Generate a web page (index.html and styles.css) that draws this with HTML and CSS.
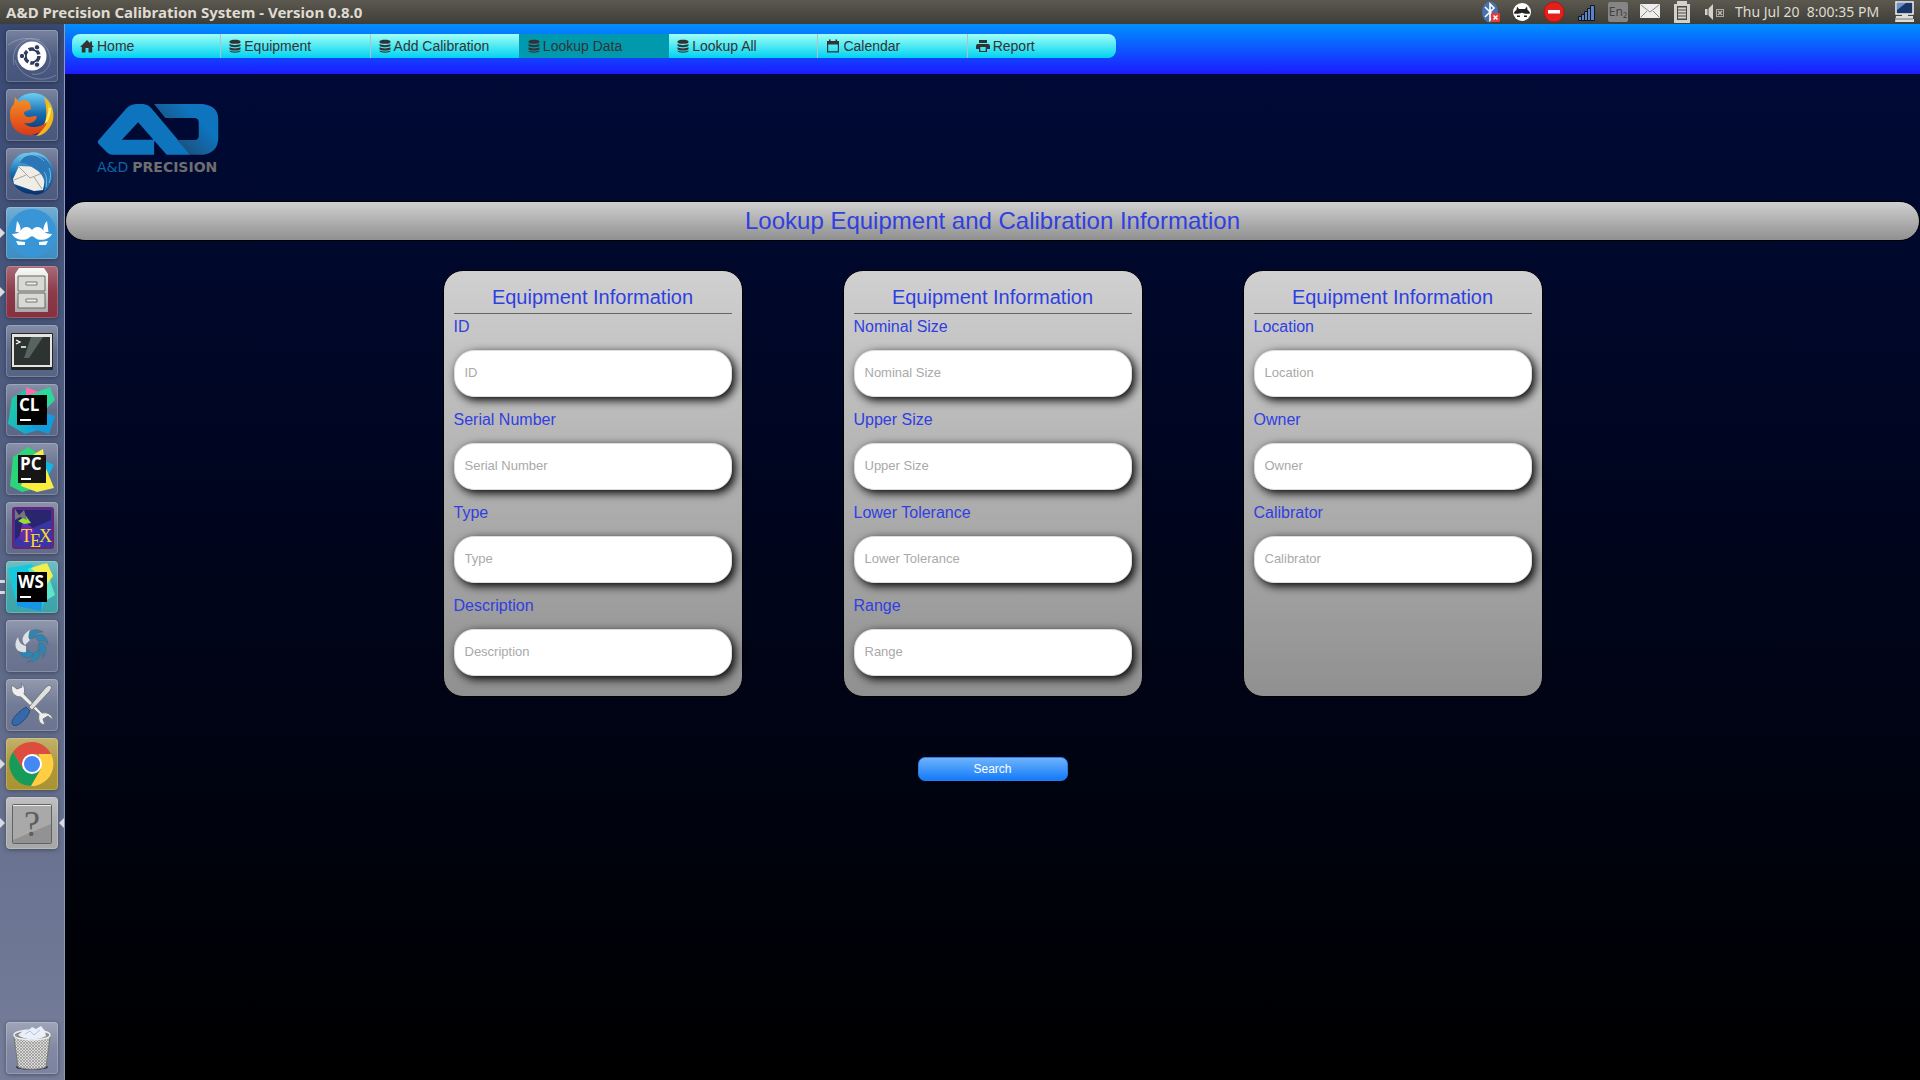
FILE: index.html
```html
<!DOCTYPE html>
<html lang="en">
<head>
<meta charset="utf-8">
<title>A&amp;D Precision Calibration System</title>
<link rel="stylesheet" href="styles.css">
</head>
<body>
<svg class="defs" aria-hidden="true">
  <defs>
    <symbol id="db" viewBox="0 0 12 14"><path d="M.5 2.600C.5 0 11.500 0 11.500 2.600v.6C11.500 5.400.5 5.400.5 3.200zM.5 5c2.300 1.500 8.700 1.500 11 0v1.600c0 2.200-11 2.200-11 0zM.5 8.300c2.300 1.500 8.700 1.500 11 0v1.600c0 2.200-11 2.200-11 0zM.5 11.500c2.300 1.400 8.700 1.400 11 0v.5c0 2.300-11 2.300-11 0z"/></symbol>
    <linearGradient id="steel" x2="0" y2="1"><stop stop-color="#fafaf8"/><stop offset="1" stop-color="#a9a9a5"/></linearGradient>
    <linearGradient id="sea" x2="0" y2="1"><stop stop-color="#6cd0f4"/><stop offset=".5" stop-color="#1769ae"/><stop offset="1" stop-color="#0a2f6c"/></linearGradient>
    <linearGradient id="fox" x2="0" y2="1"><stop stop-color="#f79226"/><stop offset="1" stop-color="#d93a16"/></linearGradient>
    <linearGradient id="mint" x2="1" y2="1"><stop stop-color="#22d88f"/><stop offset="1" stop-color="#0f9de8"/></linearGradient>
    <linearGradient id="shade" x1="0" x2="1" y1="1" y2=".2"><stop offset=".3" stop-color="#1d4f7c"/><stop offset=".75" stop-color="#0d74bd"/></linearGradient>
    <pattern id="mesh" width="3" height="3" patternUnits="userSpaceOnUse"><rect width="3" height="3" fill="#dcdcda"/><path d="M0 0l3 3M3 0L0 3" stroke="#81817f" stroke-width=".6"/></pattern>
  </defs>
</svg>

<header class="panel">
  <span class="panel-title">A&amp;D Precision Calibration System - Version 0.8.0</span>
  <div class="tray">
    <svg class="tray-icon" viewBox="0 0 32 24"><ellipse cx="15" cy="12" rx="8" ry="10.500" fill="#4673ad"/><path d="M10 7l9 9-4 4V4l4 4-9 9" fill="none" stroke="#fff" stroke-width="1.600"/><rect x="16" y="13" width="9" height="9" rx="1" fill="#e53b3b"/><path d="M18.500 15.500l4 4m0-4l-4 4" stroke="#fff" stroke-width="1.500"/></svg>
    <svg class="tray-icon" viewBox="0 0 32 24"><circle cx="15" cy="12" r="9" fill="#fff"/><path d="M9.500 10l.5-3.500L12 9h6l2-2.500.5 3.500c1.500 1 2.500 2 2.500 3.500-3 .8-5 .2-8-.8-3 1-5 1.600-8 .8 0-1.500 1-2.500 2.500-3.500zM10 15.500h3v1.500h-3zM17 15.500h3v1.500h-3z" fill="#222"/></svg>
    <svg class="tray-icon" viewBox="0 0 32 24"><circle cx="15" cy="12" r="10" fill="#e3201b" stroke="#b81410"/><rect x="9" y="10" width="12" height="3.500" fill="#fff"/></svg>
    <svg class="tray-icon" viewBox="0 0 32 24"><g fill="#5b83c4" stroke="#10151f"><path d="M7.500 16.500h3v4h-3zM10.500 14.500h3v6h-3zM13.500 11.500h3v9h-3zM16.500 8.500h3v12h-3zM19.500 5.500h4v15h-4z"/></g></svg>
    <svg class="tray-icon" viewBox="0 0 32 24"><rect x="5" y="2" width="20" height="20" rx="2" fill="#858585"/><text x="15" y="16" class="kbd">En₂</text></svg>
    <svg class="tray-icon" viewBox="0 0 32 24"><rect x="5" y="4" width="20" height="14" rx="1" fill="#eeeeec"/><path d="M6 5l9 7 9-7M6 17l6-6M24 17l-6-6" fill="none" stroke="#8c8c88"/></svg>
    <svg class="tray-icon" viewBox="0 0 32 24"><path d="M10 4V1h10v3h3v19H7V4z" fill="#d3d1cb"/><path d="M10 6h10v14H10z" fill="#4a4841"/><path d="M11 8.500h8M11 11.500h8M11 14.500h8M11 17.500h8" stroke="#d3d1cb" stroke-width="2"/></svg>
    <svg class="tray-icon" viewBox="0 0 32 24"><path d="M6 9h3l5-5v16l-5-5H6z" fill="#d3d1cb"/><path d="M9 8v8" stroke="#55534c"/><rect x="17.500" y="9.500" width="7" height="7" fill="none" stroke="#aaa89f"/><path d="M19 11l4 4m0-4l-4 4" stroke="#bbb9b0" stroke-width="1.500"/></svg>
    <time class="clock">Thu Jul 20&nbsp; 8:00:35 PM</time>
    <svg class="tray-icon" viewBox="0 0 32 24"><path d="M8 2h17v12H8z" fill="#183767" stroke="#f3f3f1" stroke-width="1.500"/><path d="M9 10l9-7h-9z" fill="#6a91cb"/><path d="M14 14h6v2h5v3h1v3H7l1-6h6z" fill="#ddddda"/><path d="M8 19h17" stroke="#777"/></svg>
  </div>
</header>

<aside class="launcher">
  <ul class="dock">
    <li><button class="tile" aria-label="Dash"><svg viewBox="0 0 52 52"><g fill="none" stroke="#bcc3d6" stroke-opacity=".4"><path d="M2 15C18 3 40 8 44 26c2 12-8 20-18 18M8 35C4 18 18 4 34 10M50 45C36 54 14 48 9 30"/></g><circle cx="26" cy="26" r="14.500" fill="#fff"/><circle cx="26" cy="26" r="7" fill="none" stroke="#303c5c" stroke-width="3.500" stroke-dasharray="12.700 2"/><g fill="#303c5c" stroke="#fff"><circle cx="16" cy="26" r="2.700"/><circle cx="31" cy="17.300" r="2.700"/><circle cx="31" cy="34.700" r="2.700"/></g></svg></button></li>
    <li><button class="tile" aria-label="Firefox"><svg viewBox="0 0 52 52"><circle cx="27" cy="25" r="21" fill="url(#sea)"/><path d="M38 8c9 6 13 20 6 30-4 6-9 9-14 9 12-9 12-25 8-39z" fill="#f7b51c"/><path d="M43 14l-1 6 3-2c0 8-2 14-8 20 4-8 6-16 6-24z" fill="#fff06b"/><path d="M9 8l4 5c4-3 9-2 11 1l1 6-7 3c0 5 4 5 6 5 3 0 5-2 7 0-2 6-8 7-13 6 5 6 16 5 23-1-3 10-12 14-20 13C10 45 3 36 4 24c0-4 2-7 4-9z" fill="url(#fox)"/></svg></button></li>
    <li><button class="tile" aria-label="Thunderbird"><svg viewBox="0 0 52 52"><path d="M4 22C6 10 15 4 22 5c14-4 27 9 25 24-1 12-11 20-21 17C12 46 3 34 4 22z" fill="url(#sea)"/><path d="M7 31l6-13 22 1 5 8-3 15-9 1-20-7z" fill="#efede6"/><path d="M12 18l12 12 15-6M8 32l12-5M36 41l-8-12" fill="none" stroke="#a5a39c"/><path d="M14 15C18 2 42 4 46 22c2 10-3 18-8 22 2-9 0-16-6-21-5-3-10-8-18-8z" fill="#2b76b5"/><path d="M14 12c6-8 18-6 24 1M38 24c3 4 3 10 2 15M43 20c2 5 2 10 0 15" fill="none" stroke="#74bbe5"/></svg></button></li>
    <li class="running"><button class="tile tile-sky" aria-label="Franz"><svg viewBox="0 0 52 52"><circle cx="26" cy="26" r="24" fill="#3996d6"/><path d="M9.500 25l1.500-11c3 3 4 7 3.500 11zM42.500 25L41 14c-3 3-4 7-3.500 11z" fill="#fff"/><path d="M26 23c-3-4-8-4-11 0-2 3-5 4-9 4 3 6 13 8 18 3 1-1 3-1 4 0 5 5 15 3 18-3-4 0-7-1-9-4-3-4-8-4-11 0zM10 34l9 1v3h-7zM42 34l-9 1v3h7z" fill="#fff"/></svg></button></li>
    <li class="running"><button class="tile tile-red" aria-label="Files"><svg viewBox="0 0 52 52"><path d="M13 2h25l4 6v38H9V8z" fill="url(#steel)"/><path d="M12 10h27v15H12zM12 27h27v15H12z" fill="#d8d8d4" stroke="#666"/><path d="M20 16h11v3H20zM20 33h11v3H20z" fill="#eee" stroke="#777"/></svg></button></li>
    <li><button class="tile" aria-label="Terminal"><svg viewBox="0 0 52 52"><rect x="5" y="8" width="42" height="37" rx="1" fill="#252725"/><rect x="6" y="9" width="40" height="33" fill="#e4e4e1"/><rect x="8" y="12" width="36" height="28" fill="#2c3331"/><path d="M25 12h12L23 33h-5z" fill="#566360"/><path d="M10 15l4 2-4 2M15 22h5" fill="none" stroke="#fff" stroke-width="1.300"/></svg></button></li>
    <li><button class="tile" aria-label="CLion"><svg viewBox="0 0 52 52"><path d="M2 40L6 14 24 3l8 43-13 4z" fill="url(#mint)"/><path d="M20 3l11 5 13-5 5 13-10 10H20z" fill="#2fd59b"/><path d="M20 3l12 5-12 4z" fill="#ff6ba8"/><path d="M35 28l14 4-6 18-18-6z" fill="#129bdb"/><rect x="11" y="11" width="30" height="30"/><text x="13" y="27" class="logo-text">CL</text><path d="M14 36h11" stroke="#fff" stroke-width="2"/></svg></button></li>
    <li><button class="tile" aria-label="PyCharm"><svg viewBox="0 0 52 52"><path d="M4 43L7 14 22 4l13 8-4 33-15 4z" fill="#2bd678"/><path d="M35 16l13 6-8 15z" fill="#12b5e5"/><path d="M25 13l12-7 2 17 9 22-17 4-16-6z" fill="#f7ee3e"/><rect x="12" y="12" width="28" height="28" fill="#161616"/><text x="14" y="27" class="logo-text">PC</text><path d="M15 36h10" stroke="#fff" stroke-width="2"/></svg></button></li>
    <li><button class="tile" aria-label="TeX editor"><svg viewBox="0 0 52 52"><rect x="7" y="6" width="40" height="40" rx="2" fill="#3835a5" stroke="#6b246d" stroke-width="2"/><path d="M9 8h36v10L18 30l-9 8z" fill="#29266f"/><path d="M17 18l12 10-8 14-8-6z" fill="#6829b1"/><path d="M12 19l8-5 5 7-7 1z" fill="#93df38"/><path d="M9 7l4 6 5-5 3 10-7-3-5 3z" fill="#77757c"/><text x="15" y="40" class="tex">T</text><text x="24" y="45" class="tex">E</text><text x="33" y="40" class="tex">X</text></svg></button></li>
    <li class="running-two"><button class="tile tile-teal" aria-label="WebStorm"><svg viewBox="0 0 52 52"><path d="M2 7l24-4 14 35-5 11-24-4z" fill="#14c9df"/><path d="M22 8L38 2l11 32-10 6z" fill="#5de5cb"/><path d="M25 7l16-5 6 13-6 8z" fill="#f5ec4e"/><path d="M10 38l26 2-1 10-24-5z" fill="#1795e4"/><rect x="11" y="11" width="30" height="30"/><text x="12" y="27" class="logo-text">WS</text><path d="M14 36h11" stroke="#fff" stroke-width="2"/></svg></button></li>
    <li><button class="tile" aria-label="Shutter"><svg viewBox="0 0 52 52"><g fill="#2b86b2" stroke="#59677e" stroke-width=".7"><path d="M21 19C20 11 29 7 37 12c-5 0-8 2-9 6z"/><path d="M29 17c6-6 13 0 13 8-3-4-6-5-10-4z"/><path d="M33 22c8 0 9 9 4 16 0-5-2-8-5-9z"/><path d="M33 30c4 7-3 13-12 12 5-2 6-5 6-9z"/><path d="M27 34c-3 7-12 4-14-3 4 2 7 1 9-1z"/></g><path d="M20 32C9 34 7 24 12 17c1 6 4 8 8 9zM19 25c-5-5-2-11 5-15-2 6-2 8 0 10z" fill="#dee0e3"/></svg></button></li>
    <li><button class="tile" aria-label="Settings"><svg viewBox="0 0 52 52"><path d="M6 6l5 4 5-2-1-4c4 3 4 7 3 11l18 19c5-1 10 1 11 7l-5-4-5 3 2 6c-6-1-7-5-6-11L15 18C9 18 4 14 6 6z" fill="#edeeed" stroke="#767b82"/><path d="M43 6l3 2-2 4-18 19-3-3 17-20z" fill="#dedfdf" stroke="#777"/><path d="M20 28l4 4C21 40 11 49 7 46c-4-4 5-13 13-18z" fill="#3569ac" stroke="#244b80"/></svg></button></li>
    <li class="running"><button class="tile tile-gold" aria-label="Chrome"><svg viewBox="0 0 52 52"><path d="M7 14a22 22 0 0 1 38 2H26l-9 15z" fill="#dc4c3f"/><path d="M7 14a22 22 0 0 0 18 34l9-16-17-1z" fill="#179b58"/><path d="M45 16a22 22 0 0 1-20 32l10-17-2-15z" fill="#ffce43"/><circle cx="26" cy="26" r="10" fill="#fff"/><circle cx="26" cy="26" r="8" fill="#4587f3"/></svg></button></li>
    <li class="running focused"><button class="tile tile-grey" aria-label="Calibration System"><svg viewBox="0 0 52 52"><rect x="6.500" y="7.500" width="39" height="39" rx="1" fill="#929292" stroke="#626262"/><path d="M7 8h38v19L7 43z" fill="#a9a9a9"/><path d="M7 8.500h38" stroke="#eee"/><text x="26" y="39" class="unknown">?</text></svg></button></li>
  </ul>
  <ul class="dock">
    <li><button class="tile" aria-label="Trash"><svg viewBox="0 0 52 52"><ellipse cx="26" cy="45" rx="16" ry="3" fill="#292d37"/><path d="M8 15l4 30c5 3 23 3 28 0l4-30z" fill="url(#mesh)" stroke="#777"/><ellipse cx="26" cy="13" rx="18" ry="5" fill="#8b8d91" stroke="#ededeb" stroke-width="1.500"/><path d="M12 13l5-4 5 0 4-4 4 2 5-3 4 5 1 5c-7 4-20 5-28-1z" fill="#eaf0fb"/><path d="M19 12l5-3 4 4 6-5" fill="none" stroke="#b5c2db"/></svg></button></li>
  </ul>
</aside>

<div class="app">
  <div class="menu-band">
    <nav class="menu">
      <a href="#"><svg viewBox="0 0 14 14"><path d="M7 1L0 8h1.800v5.500H5.500V9h3v4.500h3.700V8H14l-2-2V2.500h-1.800v1.700z"/></svg>Home</a>
      <a href="#"><svg class="narrow" viewBox="0 0 12 14"><use href="#db"/></svg>Equipment</a>
      <a href="#"><svg class="narrow" viewBox="0 0 12 14"><use href="#db"/></svg>Add Calibration</a>
      <a href="#" class="current" aria-current="page"><svg class="narrow" viewBox="0 0 12 14"><use href="#db"/></svg>Lookup Data</a>
      <a href="#"><svg class="narrow" viewBox="0 0 12 14"><use href="#db"/></svg>Lookup All</a>
      <a href="#"><svg viewBox="0 0 14 14"><path fill-rule="evenodd" d="M1 2h2V.5h1.500V2h5V.5H11V2h2v11.500H1zM2.200 5.500v6.800h9.600V5.500z"/></svg>Calendar</a>
      <a href="#"><svg viewBox="0 0 14 14"><path fill-rule="evenodd" d="M3 1h8v3H3zM2 5h10q2 0 2 2v3h-3v3H3v-3H0V7q0-2 2-2zM4.300 8v4h5.400V8z"/></svg>Report</a>
    </nav>
  </div>

  <main class="content">
    <div class="brand">
      <svg viewBox="0 0 366 154"><path fill="#0d74bd" d="M4 109L88 13Q100 1 116 0H138Q153 1 163 13L281 153H209L123 55 74 108H172V153H46Q36 153 30 147L4 121Q-2 115 4 109z"/><path fill="url(#shade)" d="M171 0H318Q365 6 365 46V106Q362 148 320 153H281L240 109H294Q306 108 306 96V56Q306 43 294 42H205z"/><path d="M172 108v7l34 38h-34z" fill="#000830"/></svg>
      <div class="brand-name"><span>A&amp;D</span><b>PRECISION</b></div>
    </div>

    <h1 class="title">Lookup Equipment and Calibration Information</h1>

    <form class="lookup">
      <div class="cards">
        <section class="card">
          <h2>Equipment Information</h2>
          <div class="field"><label for="id">ID</label><input id="id" type="text" placeholder="ID"></div>
          <div class="field"><label for="serial">Serial Number</label><input id="serial" type="text" placeholder="Serial Number"></div>
          <div class="field"><label for="type">Type</label><input id="type" type="text" placeholder="Type"></div>
          <div class="field"><label for="description">Description</label><input id="description" type="text" placeholder="Description"></div>
        </section>
        <section class="card">
          <h2>Equipment Information</h2>
          <div class="field"><label for="nominal">Nominal Size</label><input id="nominal" type="text" placeholder="Nominal Size"></div>
          <div class="field"><label for="upper">Upper Size</label><input id="upper" type="text" placeholder="Upper Size"></div>
          <div class="field"><label for="lower">Lower Tolerance</label><input id="lower" type="text" placeholder="Lower Tolerance"></div>
          <div class="field"><label for="range">Range</label><input id="range" type="text" placeholder="Range"></div>
        </section>
        <section class="card">
          <h2>Equipment Information</h2>
          <div class="field"><label for="location">Location</label><input id="location" type="text" placeholder="Location"></div>
          <div class="field"><label for="owner">Owner</label><input id="owner" type="text" placeholder="Owner"></div>
          <div class="field"><label for="calibrator">Calibrator</label><input id="calibrator" type="text" placeholder="Calibrator"></div>
        </section>
      </div>
      <button class="search" type="submit">Search</button>
    </form>
  </main>
</div>
</body>
</html>
```
FILE: styles.css
```css
* { box-sizing: border-box; }

body {
  margin: 0;
  min-height: 100vh;
  display: grid;
  grid-template: 24px 1fr / 65px 1fr;
  font-family: "Liberation Sans", Arial, sans-serif;
  background: #000;
}

.defs { position: absolute; width: 0; height: 0; }

/* desktop panel */
.panel {
  grid-column: 1 / -1;
  display: flex;
  align-items: center;
  justify-content: space-between;
  padding: 0 0 0 6px;
  background: linear-gradient(#5b594f, #3e3d38);
  color: #dfdbd2;
  font-family: "Noto Sans", sans-serif;
  line-height: 24px;
  white-space: nowrap;
}
.panel-title { font-size: 15px; font-weight: 700; }
.tray { display: flex; align-items: center; }
.tray-icon { width: 32px; height: 24px; }
.clock { width: 157px; padding-left: 4px; font-size: 14px; }
.kbd { font: 12px "Noto Sans", sans-serif; text-anchor: middle; fill: #424242; }

/* launcher */
.launcher {
  display: flex;
  flex-direction: column;
  justify-content: space-between;
  padding: 6px 0;
  border-right: 1px solid #8e9bb8;
  background: linear-gradient(#384872, #5f6a88 60%, #757d9a);
}
.dock {
  display: flex;
  flex-direction: column;
  gap: 7px;
  margin: 0;
  padding: 0;
  list-style: none;
}
.dock li {
  display: grid;
  grid-template-columns: 6px 52px 6px;
  align-items: center;
}
.dock li::before { content: ""; height: 10px; }
.dock .running::before { background: #d9dbe0; clip-path: polygon(0 0, 5px 50%, 0 100%); }
.dock .running-two::before { width: 5px; height: 8px; border: solid #d9dbe0; border-width: 3px 0; }
.dock .focused::after {
  content: "";
  height: 10px;
  background: #d9dbe0;
  clip-path: polygon(100% 0, 1px 50%, 100% 100%);
}
.tile {
  width: 52px;
  height: 52px;
  padding: 0;
  border: 0;
  border-radius: 4px;
  background: linear-gradient(rgba(255, 255, 255, .32), rgba(255, 255, 255, .1) 50%, rgba(255, 255, 255, .05));
  box-shadow: inset 0 0 0 1px rgba(255, 255, 255, .2), 0 1px 4px rgba(0, 0, 0, .35);
}
.tile svg { display: block; width: 52px; height: 52px; }
.tile-sky { background-color: #3488bf; }
.tile-red { background-color: #7f2536; }
.tile-teal { background-color: #319fa4; }
.tile-gold { background-color: #a58d27; }
.tile-grey { background-color: #a2a3a5; }
.logo-text { font: 700 17px "Open Sans", sans-serif; fill: #fff; }
.tex { font: 18px "Liberation Serif", serif; fill: #ffd92f; }
.unknown { font: 36px "Liberation Serif", serif; text-anchor: middle; fill: #5d5d5d; }

/* application */
.app {
  display: flex;
  flex-direction: column;
  background: linear-gradient(#000a38, #000);
}
.menu-band {
  padding: 10px 7px 16px;
  background: linear-gradient(#0090ff, #1c1cff);
}
.menu {
  display: flex;
  max-width: 1044px;
  border-radius: 8px;
  overflow: hidden;
  background: linear-gradient(#9ffff5, #00d2f2);
}
.menu a {
  flex: 1 1 0;
  display: flex;
  align-items: center;
  gap: 3px;
  height: 24px;
  padding-left: 8px;
  border-right: 1px solid #b0c0c4;
  color: #333;
  font-size: 14px;
  text-decoration: none;
  white-space: nowrap;
}
.menu a:last-child { border-right: 0; }
.menu a:nth-child(3), .menu a.current { border-right-color: #0099ad; }
.menu a.current { background: #0099ad; }
.menu svg { width: 14px; height: 14px; fill: #333; }
.menu .narrow { width: 12px; }

.content { padding: 30px 0; }
.brand { width: 125px; margin-left: 32px; }
.brand > svg { display: block; width: 122px; height: 51px; }
.brand-name {
  display: flex;
  gap: 4px;
  padding-top: 4px;
  font-family: "DejaVu Sans", sans-serif;
  font-size: 14px;
  line-height: 16px;
  color: #6e6e6e;
}
.brand-name span { color: #0d66a6; }

.title {
  margin: 26px 0 29px;
  border: 1px solid #000;
  border-radius: 20px;
  background: linear-gradient(#d0d0d0, #909090);
  color: #303fe0;
  font-size: 24px;
  font-weight: 400;
  line-height: 38px;
  text-align: center;
}

.lookup {
  display: flex;
  flex-direction: column;
  align-items: center;
  gap: 60px;
}
.cards {
  display: flex;
  flex-wrap: wrap;
  justify-content: center;
  gap: 100px;
}
.card {
  width: 300px;
  padding: 10px;
  border: 1px solid #000;
  border-radius: 20px;
  background: linear-gradient(#d0d0d0, #909090);
  color: #303fe0;
}
.card h2 {
  margin: 0;
  border-bottom: 1px solid #666;
  font-size: 20px;
  font-weight: 400;
  line-height: 32px;
  text-align: center;
}
.field {
  display: flex;
  flex-direction: column;
  gap: 10px;
  margin-bottom: 10px;
}
.field label { font-size: 16px; line-height: 26px; }
.field input {
  width: 100%;
  height: 47px;
  padding: 0 10px 2px;
  border: 1px solid #ddd;
  border-radius: 20px;
  background: #fff;
  box-shadow: 3px 3px 10px #000;
  font: 13px "Liberation Sans", Arial, sans-serif;
}
.field input::placeholder { color: #a9a9a9; }

.search {
  width: 150px;
  height: 24px;
  padding: 0;
  border: 1px solid #2a7de8;
  border-radius: 7px;
  background: linear-gradient(#6db3fb, #147bfa);
  color: #fff;
  font: 12px "Liberation Sans", Arial, sans-serif;
}
```
